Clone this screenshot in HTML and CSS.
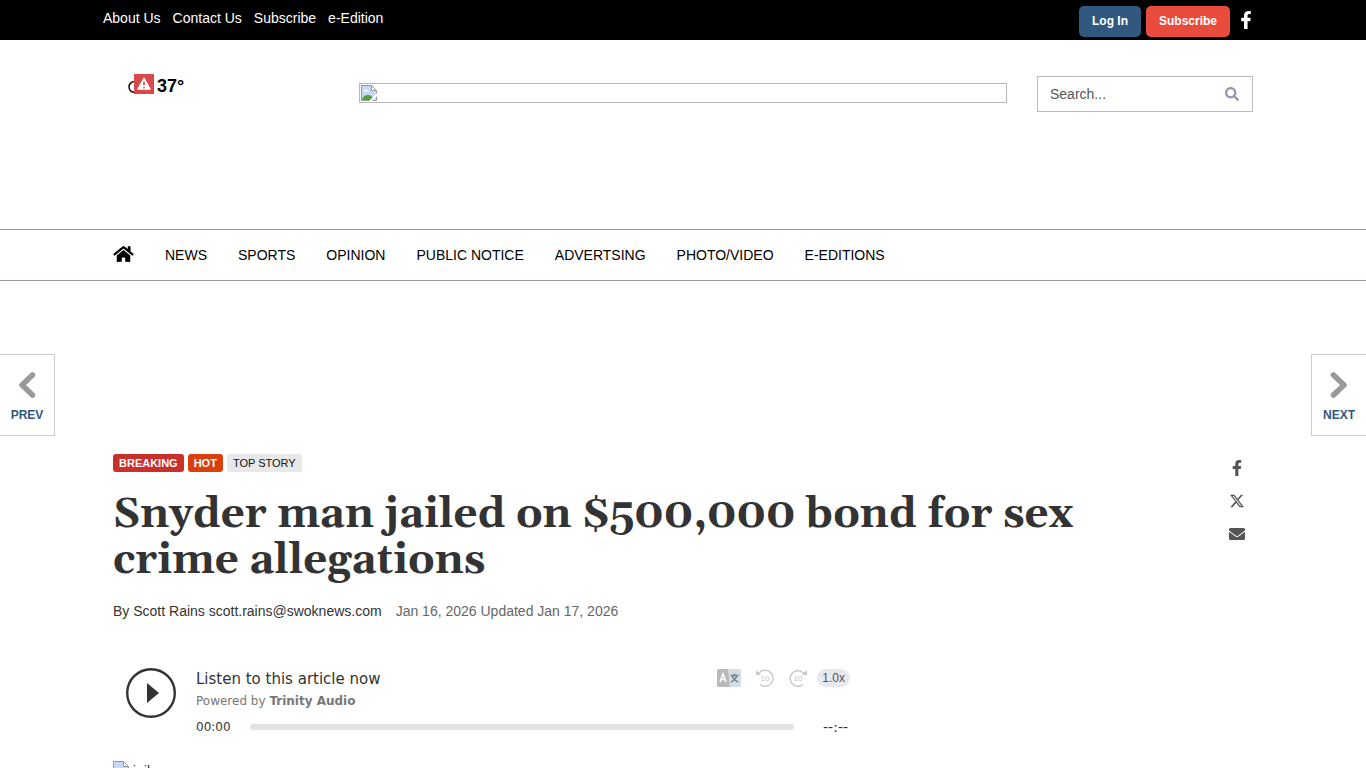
FILE: index.html
```html
<!DOCTYPE html>
<html lang="en">
<head>
    <meta charset="UTF-8">
    <meta name="viewport" content="width=device-width, initial-scale=1.0">
    <title>Snyder man jailed on $500,000 bond for sex crime allegations</title>
    <link rel="stylesheet" href="styles.css">
</head>
<body>

    <!-- Top bar -->
    <div class="topbar">
        <div class="container topbar-inner">
            <nav class="top-links">
                <a href="#">About Us</a>
                <a href="#">Contact Us</a>
                <a href="#">Subscribe</a>
                <a href="#">e-Edition</a>
            </nav>
            <div class="top-actions">
                <button class="btn btn-login" type="button">Log In</button>
                <button class="btn btn-subscribe" type="button">Subscribe</button>
                <a class="top-social" href="#" aria-label="Facebook">
                    <svg width="12" height="18" viewBox="0 0 320 512" fill="currentColor"><path d="M279.14 288l14.22-92.66h-88.91v-60.13c0-25.35 12.42-50.06 52.24-50.06h40.42V6.26S260.43 0 225.36 0c-73.22 0-121.08 44.38-121.08 124.72v70.62H22.89V288h81.39v224h100.17V288z"/></svg>
                </a>
            </div>
        </div>
    </div>

    <!-- Masthead -->
    <header class="container masthead">
        <a class="weather" href="#">
            <svg width="26" height="20" viewBox="0 0 26 20">
                <path d="M9 7.500H6.500A5.500 5.500 0 0 0 6.500 18.500H9" fill="none" stroke="#111" stroke-width="1.500"/>
                <rect x="6" y="0" width="20" height="20" fill="#d9484b"/>
                <path d="M16 4.500L22 15H10z" fill="#fff" stroke="#fff" stroke-width="1.500" stroke-linejoin="round"/>
                <path d="M16 7.500v4M16 13v1.500" stroke="#d9484b" stroke-width="1.500"/>
            </svg>
            <span>37°</span>
        </a>
        <a class="logo" href="#" aria-label="Home">
            <svg class="broken" width="16" height="16" viewBox="0 0 16 16">
                <path d="M.5.5h10l5 5v10H.5z" fill="#c5d8f5" stroke="#999"/>
                <path d="M10.500.5v5h5z" fill="#fff" stroke="#999"/>
                <path d="M3 6.500a1.500 1.500 0 0 1 2.500-1.500 1.500 1.500 0 0 1 2 1.500z" fill="#fff"/>
                <path d="M1 15c1-5 8-7 11-2l-2 2z" fill="#4ea13c"/>
                <path d="M8 16l8-8v3l-5 5z" fill="#fff"/>
            </svg>
        </a>
        <form class="search">
            <input type="text" placeholder="Search..." aria-label="Search">
            <button type="button" aria-label="Search">
                <svg width="14" height="14" viewBox="0 0 512 512" fill="currentColor"><path d="M505 442.700L405.300 343c-4.500-4.500-10.600-7-17-7H372c27.600-35.300 44-79.700 44-128C416 93.100 322.900 0 208 0S0 93.100 0 208s93.100 208 208 208c48.300 0 92.700-16.400 128-44v16.300c0 6.400 2.500 12.500 7 17l99.700 99.700c9.400 9.400 24.600 9.400 33.900 0l28.300-28.300c9.400-9.400 9.400-24.600.1-34zM208 336c-70.700 0-128-57.200-128-128 0-70.700 57.200-128 128-128 70.700 0 128 57.200 128 128 0 70.700-57.200 128-128 128z"/></svg>
            </button>
        </form>
    </header>

    <!-- Main nav -->
    <nav class="main-nav">
        <div class="container main-nav-inner">
            <a href="#" aria-label="Home">
                <svg width="21" height="18" viewBox="0 0 576 512" fill="currentColor"><path d="M280.370 148.260L96 300.110V464a16 16 0 0 0 16 16l112.060-.29a16 16 0 0 0 15.920-16V368a16 16 0 0 1 16-16h64a16 16 0 0 1 16 16v95.640a16 16 0 0 0 16 16.050L464 480a16 16 0 0 0 16-16V300L295.670 148.260a12.190 12.190 0 0 0-15.300 0zM571.600 251.470L488 182.560V44.050a12 12 0 0 0-12-12h-56a12 12 0 0 0-12 12v72.610L318.470 43a48 48 0 0 0-61 0L4.340 251.470a12 12 0 0 0-1.600 16.900l25.500 31A12 12 0 0 0 45.150 301l235.220-193.740a12.190 12.190 0 0 1 15.300 0L530.900 301a12 12 0 0 0 16.900-1.600l25.500-31a12 12 0 0 0-1.700-16.930z"/></svg>
            </a>
            <a href="#">NEWS</a>
            <a href="#">SPORTS</a>
            <a href="#">OPINION</a>
            <a href="#">PUBLIC NOTICE</a>
            <a href="#">ADVERTSING</a>
            <a href="#">PHOTO/VIDEO</a>
            <a href="#">E-EDITIONS</a>
        </div>
    </nav>

    <!-- Article -->
    <main class="container article">
        <div class="article-head">
            <div>
                <div class="labels">
                    <span class="label label-breaking">BREAKING</span>
                    <span class="label label-hot">HOT</span>
                    <span class="label">TOP STORY</span>
                </div>
                <h1>Snyder man jailed on $500,000 bond for sex crime allegations</h1>
                <div class="meta">
                    <span class="byline">By Scott Rains scott.rains@swoknews.com</span>
                    <span>Jan 16, 2026 Updated Jan 17, 2026</span>
                </div>
            </div>
            <div class="share">
                <a href="#" aria-label="Share on Facebook">
                    <svg width="16" height="16" viewBox="-96 0 512 512" fill="currentColor"><path d="M279.14 288l14.22-92.66h-88.91v-60.13c0-25.35 12.42-50.06 52.24-50.06h40.42V6.26S260.43 0 225.36 0c-73.22 0-121.08 44.38-121.08 124.72v70.62H22.89V288h81.39v224h100.17V288z"/></svg>
                </a>
                <a href="#" aria-label="Share on X">
                    <svg width="14" height="16" viewBox="0 0 16 16" fill="currentColor"><path d="M12.600.75h2.454l-5.360 6.142L16 15.250h-4.937l-3.867-5.070-4.425 5.070H.316l5.733-6.570L0 .75h5.063l3.495 4.633L12.601.75Zm-.86 13.028h1.360L4.323 2.145H2.865z"/></svg>
                </a>
                <a href="#" aria-label="Share by email">
                    <svg width="16" height="16" viewBox="0 0 512 512" fill="currentColor"><path d="M502.300 190.800c3.900-3.100 9.700-.2 9.700 4.700V400c0 26.500-21.500 48-48 48H48c-26.500 0-48-21.500-48-48V195.600c0-5 5.700-7.800 9.700-4.700 22.400 17.400 52.100 39.500 154.100 113.600 21.100 15.400 56.700 47.800 92.200 47.600 35.700.3 72-32.800 92.300-47.600 102-74.100 131.600-96.300 154-113.700zM256 320c23.200.4 56.600-29.200 73.400-41.400 132.700-96.300 142.800-104.700 173.400-128.700 5.800-4.500 9.200-11.500 9.200-18.900v-19c0-26.500-21.500-48-48-48H48c-26.500 0-48 21.500-48 48v19c0 7.400 3.400 14.300 9.200 18.900 30.600 23.900 40.700 32.400 173.400 128.700 16.800 12.200 50.200 41.800 73.400 41.400z"/></svg>
                </a>
            </div>
        </div>

        <!-- Audio player -->
        <section class="player">
            <button class="play" type="button" aria-label="Play">
                <svg width="50" height="50" viewBox="0 0 50 50"><circle cx="25" cy="25" r="23.800" fill="none" stroke="#333" stroke-width="2.400"/><path d="M21 15l12 10-12 10z" fill="#333"/></svg>
            </button>
            <div class="player-body">
                <div class="player-top">
                    <div>
                        <div class="player-title">Listen to this article now</div>
                        <div class="player-powered">Powered by <a href="#">Trinity Audio</a></div>
                    </div>
                    <div class="player-tools">
                        <button type="button" aria-label="Translate">
                            <svg width="24" height="18" viewBox="0 0 24 18">
                                <rect width="14" height="18" rx="2" fill="#b9b9b9"/>
                                <path d="M11 0h11a2 2 0 0 1 2 2v14a2 2 0 0 1-2 2h-9z" fill="#d5dee4"/>
                                <path d="M3 13L6 5l3 8M4 10.500h4" fill="none" stroke="#fff" stroke-width="1.500"/>
                                <path d="M13.500 6.500h8M17.500 4.500v2M20 6.500c-1 3-3 5-6 6.500M15 6.500c1 3 3 5 6 6.500" fill="none" stroke="#73838e" stroke-width="1.400"/>
                            </svg>
                        </button>
                        <button type="button" aria-label="Back 10 seconds">
                            <svg width="18" height="18" viewBox="0 0 18 18"><path d="M2.500 4.500A8 8 0 1 1 4 15.500" fill="none" stroke="#c8c8c8" stroke-width="1.400"/><path d="M0 1v5h5z" fill="#c8c8c8"/><text x="9" y="12" class="skip">10</text></svg>
                        </button>
                        <button type="button" aria-label="Forward 10 seconds">
                            <svg width="18" height="18" viewBox="0 0 18 18"><path d="M15 4.500A7.800 7.800 0 1 0 14 15.500" fill="none" stroke="#c8c8c8" stroke-width="1.400"/><path d="M18 1v5h-5z" fill="#c8c8c8"/><text x="9" y="12" class="skip">10</text></svg>
                        </button>
                        <button class="speed" type="button">1.0x</button>
                    </div>
                </div>
                <div class="player-track">
                    <span class="time">00:00</span>
                    <div class="bar"></div>
                    <span class="time time-end">--:--</span>
                </div>
            </div>
        </section>

        <figure class="photo">
            <svg class="broken" width="16" height="16" viewBox="0 0 16 16">
                <path d="M.5.5h10l5 5v10H.5z" fill="#c5d8f5" stroke="#999"/>
                <path d="M10.500.5v5h5z" fill="#fff" stroke="#999"/>
            </svg>
            <span>jail</span>
        </figure>
    </main>

    <!-- Prev / next -->
    <a class="pager pager-prev" href="#">
        <svg width="18" height="26" viewBox="0 0 18 26"><path d="M14.500 3L4 13l10.500 10" fill="none" stroke="#999" stroke-width="5.500" stroke-linecap="round" stroke-linejoin="round"/></svg>
        PREV
    </a>
    <a class="pager pager-next" href="#">
        <svg width="18" height="26" viewBox="0 0 18 26"><path d="M3.500 3L14 13 3.500 23" fill="none" stroke="#999" stroke-width="5.500" stroke-linecap="round" stroke-linejoin="round"/></svg>
        NEXT
    </a>

</body>
</html>
```
FILE: styles.css
```css
* {
    box-sizing: border-box;
}
body {
    font-family: Arial, "Liberation Sans", sans-serif;
    font-size: 14px;
    line-height: 20px;
    color: #333;
    background-color: #fff;
    margin: 0;
}
a {
    color: inherit;
    text-decoration: none;
}
button {
    font-family: inherit;
    border: none;
    background: none;
    padding: 0;
    cursor: pointer;
}
svg {
    display: block;
    flex-shrink: 0;
}
.container {
    max-width: 1170px;
    margin: 0 auto;
    padding: 0 15px;
}

/* Top bar */
.topbar {
    background-color: #000;
    color: #fff;
}
.topbar-inner {
    display: flex;
    justify-content: space-between;
    height: 40px;
    padding: 0 15px 0 5px;
}
.top-links {
    display: flex;
    gap: 12px;
    padding-top: 8px;
}
.top-actions {
    display: flex;
    align-items: center;
    gap: 5px;
    padding: 2px 0 0;
}
.btn {
    color: #fff;
    font-size: 12px;
    font-weight: bold;
    line-height: 17px;
    padding: 7px 13px;
    border-radius: 5px;
}
.btn-login {
    background-color: #31587f;
}
.btn-subscribe {
    background-color: #e94b3c;
}
.top-social {
    padding: 0 1px 2px 5px;
}

/* Masthead */
.masthead {
    display: flex;
    align-items: flex-start;
    height: 189px;
    padding-top: 34px;
}
.weather {
    display: flex;
    align-items: flex-start;
    gap: 3px;
    width: 246px;
    padding-left: 15px;
    font-size: 18px;
    line-height: 24px;
    font-weight: bold;
    color: #000;
}
.logo {
    flex: 1;
    height: 20px;
    margin: 9px 30px 0 0;
    padding: 1px;
    border: 1px solid #b8b8b8;
}
.search {
    display: flex;
    width: 216px;
    height: 36px;
    margin-top: 2px;
    border: 1px solid #bbb;
}
.search input {
    flex: 1;
    min-width: 0;
    padding: 0 12px;
    border: none;
    font-family: inherit;
    font-size: 14px;
}
.search input::placeholder {
    color: #555;
}
.search button {
    padding: 0 13px;
    color: #9494b8;
}

/* Main nav */
.main-nav {
    border-top: 1px solid #9999ad;
    border-bottom: 1px solid #9999ad;
}
.main-nav-inner {
    display: flex;
    align-items: center;
    gap: 31px;
    height: 50px;
    color: #000;
}
.main-nav-inner svg {
    margin-bottom: 3px;
}

/* Article */
.article {
    padding-top: 173px;
}
.article-head {
    display: flex;
    justify-content: space-between;
}
.labels {
    display: flex;
    gap: 4px;
}
.label {
    padding: 0 6px;
    border-radius: 3px;
    background-color: #e8e8e8;
    color: #111;
    font-size: 11px;
    line-height: 18px;
}
.label-breaking,
.label-hot {
    color: #fff;
    font-weight: bold;
}
.label-breaking {
    background-color: #c9302c;
}
.label-hot {
    background-color: #d9400b;
}
h1 {
    max-width: 1000px;
    margin: 20px 0 17px;
    font-family: Georgia, Gelasio, "DejaVu Serif", serif;
    font-size: 42px;
    line-height: 46px;
    font-weight: bold;
}
.meta {
    display: flex;
    gap: 14px;
    color: #666;
}
.byline {
    color: #333;
}
.share {
    display: flex;
    flex-direction: column;
    align-items: center;
    gap: 17px;
    padding: 6px 8px 0 0;
    color: #555;
}

/* Audio player */
.player {
    display: flex;
    align-items: flex-start;
    gap: 20px;
    max-width: 750px;
    margin-top: 32px;
    padding: 15px 13px 0;
    font-family: Verdana, "DejaVu Sans", sans-serif;
}
.player-body {
    flex: 1;
}
.player-top,
.player-track {
    display: flex;
    justify-content: space-between;
}
.player-title {
    font-size: 15px;
    line-height: 22px;
}
.player-powered {
    font-size: 12px;
    line-height: 22px;
    color: #777;
}
.player-powered a {
    font-weight: bold;
}
.player-tools {
    display: flex;
    align-items: center;
    gap: 15px;
    height: 20px;
}
.player-tools .speed {
    height: 18px;
    margin-left: -5px;
    padding: 0 5px;
    border-radius: 9px;
    background-color: #e8e8f0;
    color: #555;
    font-family: Arial, "Liberation Sans", sans-serif;
    font-size: 12px;
}
.skip {
    font-family: Arial, "Liberation Sans", sans-serif;
    font-size: 8px;
    text-anchor: middle;
    fill: #c8c8c8;
}
.player-track {
    align-items: center;
    padding-top: 5px;
}
.time {
    width: 54px;
    font-size: 12px;
}
.time-end {
    width: 56px;
    padding-right: 2px;
    font-size: 14px;
    text-align: right;
}
.bar {
    flex: 1;
    height: 6px;
    border-radius: 3px;
    background-color: #e3e3e3;
}

.photo {
    display: flex;
    gap: 4px;
    margin: 24px 0;
}

/* Prev / next */
.pager {
    position: fixed;
    top: 354px;
    display: flex;
    flex-direction: column;
    align-items: center;
    gap: 7px;
    width: 55px;
    height: 82px;
    padding-top: 17px;
    border: 1px solid #ccc;
    background-color: #fff;
    color: #31587f;
    font-size: 12px;
    font-weight: bold;
}
.pager-prev {
    left: 0;
    border-left: none;
}
.pager-next {
    right: 0;
    border-right: none;
}
```
